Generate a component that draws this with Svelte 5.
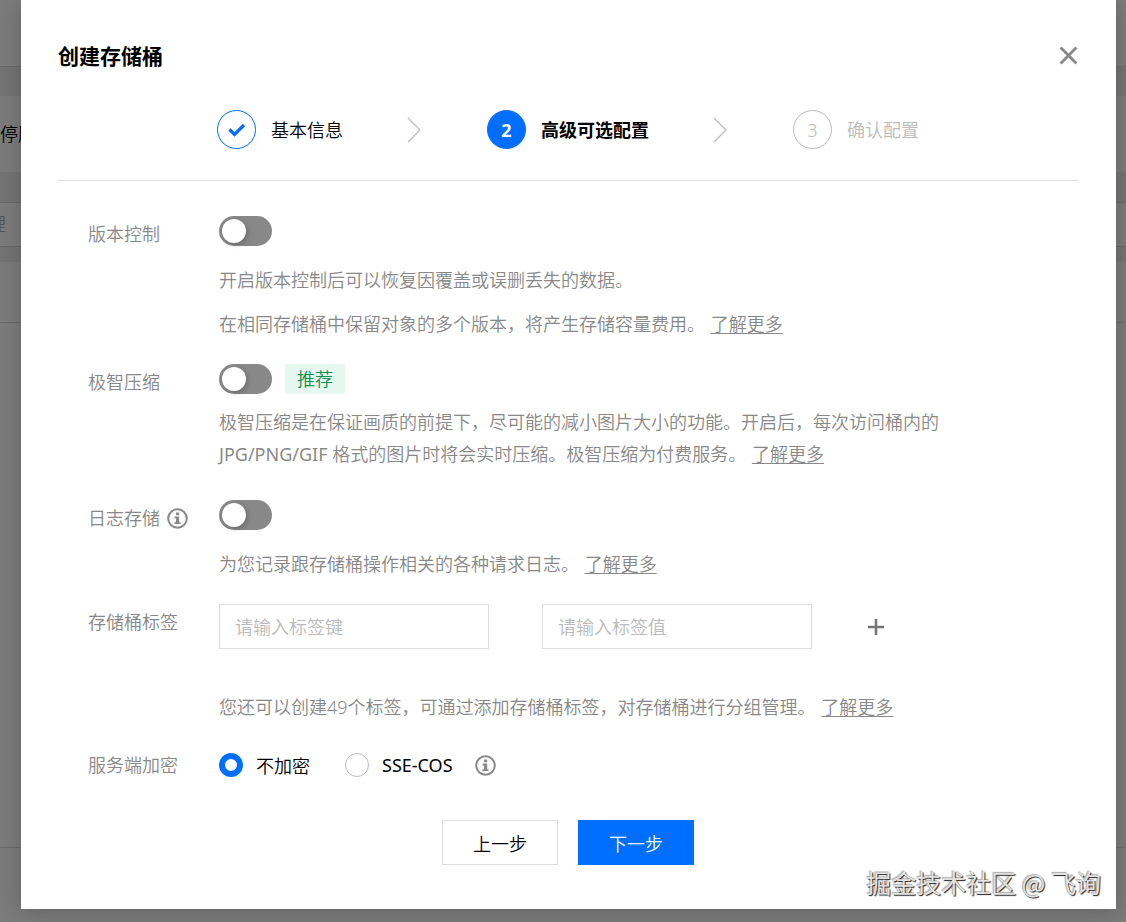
<script>
    let versioning = $state(false);
    let compression = $state(false);
    let logging = $state(false);
    let tagKey = $state('');
    let tagValue = $state('');
    let encryption = $state('none');
</script>

{#snippet info()}
    <svg class="info" viewBox="0 0 21 21" aria-hidden="true">
        <circle cx="10.5" cy="10.5" r="9.3" fill="none" stroke="currentColor" stroke-width="2" />
        <path d="M9 4.6h3.2v2.6H9zM7.6 8.6h4.6v5.6h1.4V16H7.4v-1.8H9v-3.8H7.6z" fill="currentColor" />
    </svg>
{/snippet}

{#snippet arrow()}
    <svg class="arrow" viewBox="0 0 14 26" aria-hidden="true">
        <path d="M1 1l12 12L1 25" fill="none" stroke="#bbb" stroke-width="1.2" />
    </svg>
{/snippet}

<div class="screen">
    <div class="page" aria-hidden="true">
        <div class="topbar"></div>
        <div class="space"></div>
        <div class="notice">停服</div>
        <div class="space toolbar"></div>
        <div class="search">理</div>
        <div class="space narrow"></div>
        <div class="thead"></div>
        <div class="tbody"></div>
        <div class="tfoot"></div>
    </div>

    <main class="dialog">
        <header>
            <h1>创建存储桶</h1>
            <button class="close" type="button" aria-label="关闭">
                <svg viewBox="0 0 18 18"><path d="M1.5 1.5l15 15M16.5 1.5l-15 15" stroke="#888" stroke-width="2.6" /></svg>
            </button>
        </header>

        <ol class="steps">
            <li class="done">
                <span class="circle">
                    <svg class="check" viewBox="0 0 18 14"><path d="M1.5 6.5l5 5L16 2" fill="none" stroke="currentColor" stroke-width="3.2" /></svg>
                </span>
                基本信息
            </li>
            <li class="sep">{@render arrow()}</li>
            <li class="current"><span class="circle">2</span>高级可选配置</li>
            <li class="sep">{@render arrow()}</li>
            <li class="todo"><span class="circle">3</span>确认配置</li>
        </ol>

        <form>
            <div class="row">
                <label class="label" for="versioning">版本控制</label>
                <div class="field">
                    <input class="switch" id="versioning" type="checkbox" role="switch" bind:checked={versioning} />
                    <p>开启版本控制后可以恢复因覆盖或误删丢失的数据。</p>
                    <p class="next">在相同存储桶中保留对象的多个版本，将产生存储容量费用。 <a href="#versioning">了解更多</a></p>
                </div>
            </div>

            <div class="row tall">
                <label class="label" for="compression">极智压缩</label>
                <div class="field">
                    <div class="line">
                        <input class="switch" id="compression" type="checkbox" role="switch" bind:checked={compression} />
                        <span class="badge">推荐</span>
                    </div>
                    <p class="next">极智压缩是在保证画质的前提下，尽可能的减小图片大小的功能。开启后，每次访问桶内的 <span class="latin">JPG/PNG/GIF</span> 格式的图片时将会实时压缩。极智压缩为付费服务。 <a href="#compression">了解更多</a></p>
                </div>
            </div>

            <div class="row">
                <label class="label" for="logging">日志存储{@render info()}</label>
                <div class="field">
                    <input class="switch" id="logging" type="checkbox" role="switch" bind:checked={logging} />
                    <p>为您记录跟存储桶操作相关的各种请求日志。 <a href="#logging">了解更多</a></p>
                </div>
            </div>

            <div class="row">
                <label class="label" for="tag-key">存储桶标签</label>
                <div class="field">
                    <div class="tags">
                        <input id="tag-key" type="text" placeholder="请输入标签键" bind:value={tagKey} />
                        <input type="text" aria-label="标签值" placeholder="请输入标签值" bind:value={tagValue} />
                        <button class="add" type="button" aria-label="添加标签">
                            <svg viewBox="0 0 16 16"><path d="M8 0v16M0 8h16" stroke="#777" stroke-width="2.6" /></svg>
                        </button>
                    </div>
                    <p class="far">您还可以创建49个标签，可通过添加存储桶标签，对存储桶进行分组管理。 <a href="#tag-key">了解更多</a></p>
                </div>
            </div>

            <div class="row">
                <span class="label" id="encryption">服务端加密</span>
                <div class="field radios" role="radiogroup" aria-labelledby="encryption">
                    <label><input type="radio" name="encryption" value="none" bind:group={encryption} />不加密</label>
                    <label><input type="radio" name="encryption" value="sse" bind:group={encryption} /><span class="latin">SSE-COS</span></label>
                    {@render info()}
                </div>
            </div>

            <div class="actions">
                <button type="button">上一步</button>
                <button class="primary" type="button">下一步</button>
            </div>
        </form>
    </main>

    <div class="watermark">掘金技术社区 @ 飞询</div>
</div>

<style>
    :global(body) {
        margin: 0;
        background: #7a7a7a;
    }

    .screen {
        position: relative;
        display: grid;
        min-height: 100vh;
        font-family: 'Noto Sans', 'Noto Sans CJK SC', sans-serif;
        font-size: 18px;
        font-weight: 350;
        color: #000;
    }

    .screen *,
    .screen {
        box-sizing: border-box;
    }

    .page,
    .dialog {
        grid-area: 1 / 1;
    }

    /* dimmed console page behind the dialog */
    .page {
        display: flex;
        flex-direction: column;
        overflow: hidden;
        background: #7b7b7b;
    }

    .page div {
        flex-shrink: 0;
        white-space: nowrap;
    }

    .topbar {
        height: 67px;
        border-bottom: 1px solid #6a6a6a;
    }

    .space {
        height: 29px;
        background: #737373;
    }

    .notice {
        height: 76px;
        line-height: 76px;
    }

    .toolbar {
        height: 30px;
    }

    .search {
        height: 45px;
        border: solid #676767;
        border-width: 1px 0;
        line-height: 43px;
        text-indent: -12px;
        color: #555;
    }

    .narrow {
        height: 15px;
    }

    .thead {
        height: 61px;
        border-bottom: 1px solid #6a6a6a;
    }

    .tbody {
        height: 525px;
        border-bottom: 1px solid #6a6a6a;
    }

    .dialog {
        z-index: 1;
        align-self: start;
        margin: 0 10px 13px 21px;
        padding: 36px 38px 44px 37px;
        background: #fff;
        box-shadow: 0 3px 20px rgba(0, 0, 0, 0.2);
    }

    header {
        display: flex;
        align-items: flex-start;
        justify-content: space-between;
    }

    h1 {
        margin: 0;
        font-size: 21px;
        line-height: 40px;
        font-weight: 700;
    }

    button {
        font: inherit;
        color: inherit;
        cursor: pointer;
    }

    .close,
    .add {
        display: flex;
        padding: 0;
        border: 0;
        background: none;
    }

    .close {
        padding-top: 10px;
    }

    .close svg {
        width: 19px;
        height: 19px;
    }

    .steps {
        display: flex;
        align-items: center;
        justify-content: center;
        margin: 0;
        padding: 34px 0 31px;
        border-bottom: 1px solid #ddd;
        list-style: none;
    }

    .steps li {
        display: flex;
        align-items: center;
        gap: 15px;
        line-height: 36px;
    }

    .steps .sep {
        margin: 0 66px 0 64px;
    }

    .arrow {
        width: 14px;
        height: 26px;
    }

    .circle {
        display: flex;
        align-items: center;
        justify-content: center;
        width: 39px;
        height: 39px;
        border: 1px solid currentColor;
        border-radius: 50%;
    }

    .done .circle {
        color: #006eff;
    }

    .check {
        width: 18px;
        height: 14px;
    }

    .current {
        font-weight: 700;
    }

    .current .circle {
        border-color: #006eff;
        background: #006eff;
        color: #fff;
    }

    .todo {
        color: #bbb;
    }

    form {
        display: flex;
        flex-direction: column;
        gap: 24px;
        padding: 35px 0 0 30px;
    }

    .row {
        display: grid;
        grid-template-columns: 131px minmax(0, 736px);
        align-items: start;
        color: #888;
    }

    .tall {
        padding-bottom: 6px;
    }

    .label {
        display: flex;
        align-items: center;
        gap: 7px;
        line-height: 36px;
    }

    .latin {
        font-weight: 400;
    }

    .info {
        width: 21px;
        height: 21px;
        color: #888;
    }

    .switch {
        appearance: none;
        display: block;
        width: 53px;
        height: 30px;
        margin: 0;
        padding: 3px;
        border-radius: 15px;
        background: #888;
        cursor: pointer;
    }

    .switch::before {
        content: '';
        display: block;
        width: 24px;
        height: 24px;
        border-radius: 50%;
        background: #fff;
        box-shadow: 2px 2px 5px rgba(0, 0, 0, 0.2);
    }

    .switch:checked {
        background: #006eff;
    }

    .switch:checked::before {
        margin-left: 23px;
    }

    .line {
        display: flex;
        gap: 13px;
    }

    .badge {
        padding: 0 12px;
        border-radius: 2px;
        background: #e5f7ee;
        color: #078f50;
        line-height: 30px;
    }

    p {
        margin: 18px 0 0;
        line-height: 32px;
    }

    .next {
        margin-top: 12px;
    }

    .far {
        margin-top: 42px;
    }

    a {
        margin-left: 1px;
        color: inherit;
        text-underline-offset: 2px;
        text-decoration-thickness: 1px;
    }

    .tags {
        display: flex;
        align-items: center;
        gap: 53px;
    }

    .tags input {
        width: 270px;
        height: 45px;
        padding: 0 15px;
        border: 1px solid #ddd;
        font: inherit;
        color: #000;
    }

    .tags input::placeholder {
        color: #bbb;
        opacity: 1;
    }

    .add {
        padding: 3px;
    }

    .add svg {
        width: 16px;
        height: 16px;
    }

    .radios {
        display: flex;
        align-items: center;
        height: 36px;
    }

    .radios label {
        display: flex;
        align-items: center;
        gap: 13px;
        margin-right: 35px;
        color: #000;
    }

    .radios label:nth-of-type(2) {
        margin-right: 22px;
    }

    .radios input {
        appearance: none;
        width: 24px;
        height: 24px;
        margin: 0;
        border: 1px solid #bbb;
        border-radius: 50%;
    }

    .radios input:checked {
        border: 6px solid #006eff;
    }

    .actions {
        display: flex;
        justify-content: center;
        gap: 20px;
        padding: 13px 30px 0 0;
    }

    .actions button {
        width: 116px;
        height: 45px;
        border: 1px solid #ddd;
        background: #fff;
    }

    .actions .primary {
        border-color: #006eff;
        background: #006eff;
        color: #fff;
    }

    .watermark {
        position: absolute;
        z-index: 2;
        right: 25px;
        bottom: 22px;
        font: 400 25px/36px 'Noto Sans CJK SC', sans-serif;
        color: #e2e2e2;
        text-shadow: 1px 1px 1px #222, -1px -1px 1px #aaa;
    }
</style>
